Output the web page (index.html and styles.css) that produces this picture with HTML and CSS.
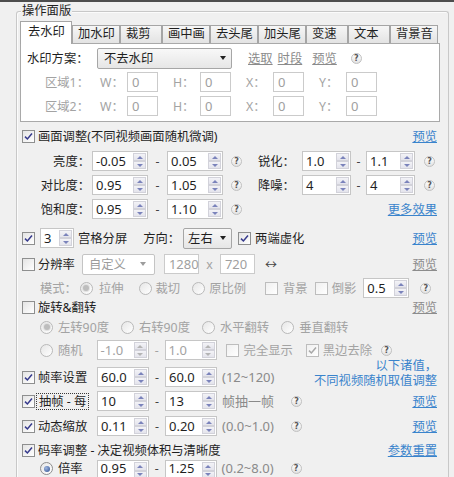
FILE: index.html
```html
<!DOCTYPE html>
<html lang="zh-CN">
<head>
<meta charset="utf-8">
<title>操作面版</title>
<link rel="stylesheet" href="styles.css">
</head>
<body>
<div class="topbar"></div>
<div class="group">
  <span class="legend">操作面版</span>
  <div class="tabs">
    <div class="tab active">去水印</div>
    <div class="tab">加水印</div>
    <div class="tab two">裁剪</div>
    <div class="tab">画中画</div>
    <div class="tab">去头尾</div>
    <div class="tab">加头尾</div>
    <div class="tab two">变速</div>
    <div class="tab two">文本</div>
    <div class="tab">背景音</div>
  </div>
  <div class="panel">
    <div class="prow first">
      <span class="plabel">水印方案：</span>
      <div class="combo scheme"><span>不去水印</span><i class="caret"></i></div>
      <a class="glink ml16">选取</a>
      <a class="glink ml5">时段</a>
      <a class="glink ml10">预览</a>
      <span class="help ml14">?</span>
    </div>
    <div class="prow">
      <span class="arealabel dis">区域1：</span>
      <span class="dim dis">W：</span><span class="inp small">0</span>
      <span class="dim dis ml15">H：</span><span class="inp small">0</span>
      <span class="dim dis ml15">X：</span><span class="inp small">0</span>
      <span class="dim dis ml15">Y：</span><span class="inp small">0</span>
    </div>
    <div class="prow third">
      <span class="arealabel dis">区域2：</span>
      <span class="dim dis">W：</span><span class="inp small">0</span>
      <span class="dim dis ml15">H：</span><span class="inp small">0</span>
      <span class="dim dis ml15">X：</span><span class="inp small">0</span>
      <span class="dim dis ml15">Y：</span><span class="inp small">0</span>
    </div>
  </div>

  <div class="adjust">
    <div class="row">
      <span class="cb"><svg viewBox="0 0 11 11"><path d="M2 5.6 4.4 8 9 2.6"/></svg></span>
      <span class="ml3">画面调整(不同视频画面随机微调)</span>
      <a class="link">预览</a>
    </div>
    <div class="row g5">
      <span class="rlabel">亮度：</span>
      <div class="spin ml2"><span class="val">-0.05</span><span class="btns"><i class="up"></i><i class="dn"></i></span></div>
      <span class="dash">-</span>
      <div class="spin"><span class="val">0.05</span><span class="btns"><i class="up"></i><i class="dn"></i></span></div>
      <span class="help ml8">?</span>
      <span class="rlabel2">锐化：</span>
      <div class="spin n49"><span class="val">1.0</span><span class="btns"><i class="up"></i><i class="dn"></i></span></div>
      <span class="dash d15">-</span>
      <div class="spin n49"><span class="val">1.1</span><span class="btns"><i class="up"></i><i class="dn"></i></span></div>
      <span class="help ml9">?</span>
    </div>
    <div class="row">
      <span class="rlabel">对比度：</span>
      <div class="spin ml2"><span class="val">0.95</span><span class="btns"><i class="up"></i><i class="dn"></i></span></div>
      <span class="dash">-</span>
      <div class="spin"><span class="val">1.05</span><span class="btns"><i class="up"></i><i class="dn"></i></span></div>
      <span class="help ml8">?</span>
      <span class="rlabel2">降噪：</span>
      <div class="spin n49"><span class="val">4</span><span class="btns"><i class="up"></i><i class="dn"></i></span></div>
      <span class="dash d15">-</span>
      <div class="spin n49"><span class="val">4</span><span class="btns"><i class="up"></i><i class="dn"></i></span></div>
      <span class="help ml9">?</span>
    </div>
    <div class="row">
      <span class="rlabel">饱和度：</span>
      <div class="spin ml2"><span class="val">0.95</span><span class="btns"><i class="up"></i><i class="dn"></i></span></div>
      <span class="dash">-</span>
      <div class="spin"><span class="val">1.10</span><span class="btns"><i class="up"></i><i class="dn"></i></span></div>
      <span class="help ml8">?</span>
      <a class="link">更多效果</a>
    </div>
    <div class="row g9">
      <span class="cb"><svg viewBox="0 0 11 11"><path d="M2 5.6 4.4 8 9 2.6"/></svg></span>
      <div class="spin n34 ml5"><span class="val">3</span><span class="btns"><i class="up"></i><i class="dn"></i></span></div>
      <span class="ml4">宫格分屏</span>
      <span class="ml16">方向：</span>
      <div class="combo dir ml3"><span>左右</span><i class="caret"></i></div>
      <span class="cb ml6"><svg viewBox="0 0 11 11"><path d="M2 5.6 4.4 8 9 2.6"/></svg></span>
      <span class="ml4">两端虚化</span>
      <a class="link">预览</a>
    </div>
    <div class="row g6">
      <span class="cb"></span>
      <span class="ml3">分辨率</span>
      <div class="combo dis res ml7"><span>自定义</span><i class="caret"></i></div>
      <span class="inp mid ml9">1280</span>
      <span class="times dis">x</span>
      <span class="inp mid">720</span>
      <span class="arrow ml10">↔</span>
      <a class="link off">预览</a>
    </div>
    <div class="row">
      <span class="dis ml18">模式：</span>
      <span class="rb on ml3"></span>
      <span class="dis ml6">拉伸</span>
      <span class="rb ml15"></span>
      <span class="dis ml4">裁切</span>
      <span class="rb ml12"></span>
      <span class="dis ml4">原比例</span>
      <span class="cb dis-cb ml19"></span>
      <span class="dis ml5">背景</span>
      <span class="cb dis-cb ml7"></span>
      <span class="dis ml4">倒影</span>
      <div class="spin n46 ml7"><span class="val">0.5</span><span class="btns"><i class="up"></i><i class="dn"></i></span></div>
      <span class="help ml11">?</span>
    </div>
    <div class="row g0 h19">
      <span class="cb"></span>
      <span class="ml3">旋转&amp;翻转</span>
      <a class="link off">预览</a>
    </div>
    <div class="row g0">
      <span class="rb on ml18"></span>
      <span class="dis ml5">左转90度</span>
      <span class="rb ml12"></span>
      <span class="dis ml5">右转90度</span>
      <span class="rb ml12"></span>
      <span class="dis ml5">水平翻转</span>
      <span class="rb ml12"></span>
      <span class="dis ml5">垂直翻转</span>
    </div>
    <div class="row g3">
      <span class="rb ml18"></span>
      <span class="dis ml5">随机</span>
      <div class="spin s52 off ml14"><span class="val">-1.0</span><span class="btns"><i class="up"></i><i class="dn"></i></span></div>
      <span class="dash d16 dis">-</span>
      <div class="spin s52 off"><span class="val">1.0</span><span class="btns"><i class="up"></i><i class="dn"></i></span></div>
      <span class="cb dis-cb ml9"></span>
      <span class="dis ml5">完全显示</span>
      <span class="cb dis-cb ml13"><svg viewBox="0 0 11 11"><path class="grey" d="M2 5.6 4.4 8 9 2.6"/></svg></span>
      <span class="dis ml4">黑边去除</span>
      <span class="help ml9">?</span>
    </div>
    <div class="row g7">
      <span class="cb"><svg viewBox="0 0 11 11"><path d="M2 5.6 4.4 8 9 2.6"/></svg></span>
      <span class="cell">帧率设置</span>
      <div class="spin s52"><span class="val">60.0</span><span class="btns"><i class="up"></i><i class="dn"></i></span></div>
      <span class="dash d16">-</span>
      <div class="spin s52"><span class="val">60.0</span><span class="btns"><i class="up"></i><i class="dn"></i></span></div>
      <span class="range">(12~120)</span>
      <div class="note"><span class="nline">以下诸值，</span><span class="nline">不同视频随机取值调整</span></div>
    </div>
    <div class="row">
      <span class="cb"><svg viewBox="0 0 11 11"><path d="M2 5.6 4.4 8 9 2.6"/></svg></span>
      <span class="cell"><span class="focus">抽帧 - 每</span></span>
      <div class="spin s52"><span class="val">10</span><span class="btns"><i class="up"></i><i class="dn"></i></span></div>
      <span class="dash d16">-</span>
      <div class="spin s52"><span class="val">13</span><span class="btns"><i class="up"></i><i class="dn"></i></span></div>
      <span class="range">帧抽一帧</span>
      <span class="help">?</span>
      <a class="link">预览</a>
    </div>
    <div class="row g5">
      <span class="cb"><svg viewBox="0 0 11 11"><path d="M2 5.6 4.4 8 9 2.6"/></svg></span>
      <span class="cell">动态缩放</span>
      <div class="spin s52"><span class="val">0.11</span><span class="btns"><i class="up"></i><i class="dn"></i></span></div>
      <span class="dash d16">-</span>
      <div class="spin s52"><span class="val">0.20</span><span class="btns"><i class="up"></i><i class="dn"></i></span></div>
      <span class="range">(0.0~1.0)</span>
      <span class="help">?</span>
      <a class="link">预览</a>
    </div>
    <div class="row g5 h19">
      <span class="cb"><svg viewBox="0 0 11 11"><path d="M2 5.6 4.4 8 9 2.6"/></svg></span>
      <span class="ml3">码率调整 - 决定视频体积与清晰度</span>
      <a class="link">参数重置</a>
    </div>
    <div class="row g0 last">
      <span class="rb on live ml18"></span>
      <span class="ml5">倍率</span>
      <div class="spin s52 ml14"><span class="val">0.95</span><span class="btns"><i class="up"></i><i class="dn"></i></span></div>
      <span class="dash d16">-</span>
      <div class="spin s52"><span class="val">1.25</span><span class="btns"><i class="up"></i><i class="dn"></i></span></div>
      <span class="range">(0.2~8.0)</span>
      <span class="help">?</span>
    </div>
  </div>
</div>
</body>
</html>
```

FILE: styles.css
```css
* { box-sizing: border-box; }
html, body { margin: 0; padding: 0; }
body {
  width: 454px;
  height: 477px;
  overflow: hidden;
  background: #f0f0f0;
  color: #1f1f1f;
  font-family: "Noto Sans", "Noto Sans CJK SC", sans-serif;
  font-size: 12.3px;
  line-height: 17px;
}
a { cursor: pointer; }

.topbar { height: 2px; background: #4d4d4d; }

.group {
  position: relative;
  margin: 9px 0 0 16px;
  width: 433px;
  height: 466px;
  border: 1px solid #c8c8c8;
  border-bottom: 0;
  border-radius: 3px 3px 0 0;
  padding: 9px 8px 0 3px;
  box-shadow: inset 1px 1px 0 #fbfbfb;
}
.legend {
  position: absolute;
  left: 4px;
  top: -9px;
  padding: 0 1px;
  line-height: 16px;
  background: #f0f0f0;
}

/* tabs */
.tabs {
  display: flex;
  align-items: flex-end;
  height: 22px;
  position: relative;
  z-index: 1;
}
.tab {
  width: 48px;
  height: 18px;
  padding-left: 5px;
  border: 1px solid #a5a5a5;
  border-bottom: 0;
  background: linear-gradient(#f6f6f6, #e3e3e3);
  line-height: 16px;
  white-space: nowrap;
}
.tab.two { width: 42px; }
.tab.active {
  width: 52px;
  height: 23px;
  margin-bottom: -1px;
  padding-left: 7px;
  background: #fff;
  line-height: 20px;
}

.panel {
  height: 79px;
  background: #fff;
  border: 1px solid #a9a9a9;
  padding: 3px 0 0 6px;
}
.prow { display: flex; align-items: center; height: 20px; margin-top: 3px; }
.prow.first { height: 22px; margin-top: 0; }
.prow.third { margin-top: 4px; }
.plabel { width: 70px; flex: none; }
.arealabel { width: 55px; margin-left: 18px; flex: none; }
.dim { width: 27px; flex: none; }

.glink { color: #8b8b8b; text-decoration: underline; }

/* lower section */
.adjust { padding: 0 3px 0 2px; }
.row {
  display: flex;
  align-items: center;
  height: 20px;
  margin-top: 4px;
  white-space: nowrap;
}
.row.g0 { margin-top: 0; }
.row.g3 { margin-top: 3px; }
.row.g5 { margin-top: 5px; }
.row.g6 { margin-top: 6px; }
.row.g7 { margin-top: 7px; }
.row.g9 { margin-top: 9px; }
.row.h19 { height: 19px; }
.row.last { height: 17px; line-height: 15px; }
.row.last .spin { height: 17px; border-bottom: 0; }
.row.last .spin .val { line-height: 15px; }
.row.last .spin .btns { padding-bottom: 0; }
.row.last .spin .btns i.dn { flex: 0 0 6px; border-bottom: 0; }

.rlabel { width: 68px; text-align: right; flex: none; }
.rlabel2 { width: 44px; margin-left: 16px; flex: none; }
.cell { width: 59px; margin-left: 3px; flex: none; }
.focus {
  display: inline-block;
  margin-left: -2px;
  padding: 0 2px;
  border: 1px dotted #3a3a3a;
  line-height: 15px;
}
.range { width: 69px; margin-left: 5px; flex: none; color: #8a8a8a; font-size: 13px; }
.dash { width: 19px; text-align: center; flex: none; color: #444; }
.dash.d15 { width: 15px; }
.dash.d16 { width: 16px; }
.times { width: 21px; text-align: center; flex: none; }
.arrow { color: #444; font-size: 12px; }

.dis { color: #a3a3a3; }

.link { margin-left: auto; color: #3a84cc; text-decoration: underline; }
.link.off { color: #8c8c8c; }

.note {
  margin-left: auto;
  align-self: flex-end;
  margin-bottom: -1px;
  display: flex;
  flex-direction: column;
  align-items: flex-end;
  color: #3a84cc;
}
.nline { display: block; height: 15px; line-height: 15px; }

/* controls */
.cb {
  width: 13px;
  height: 13px;
  flex: none;
  border: 1px solid #8e8f8f;
  background: linear-gradient(135deg, #e4e4e4, #ffffff);
  display: flex;
  align-items: center;
  justify-content: center;
}
.cb.dis-cb { border-color: #bdbdbd; background: linear-gradient(135deg, #f0f0f0, #ffffff); }
.cb svg { width: 11px; height: 11px; }
.cb path { fill: none; stroke: #363a8c; stroke-width: 1.5; }
.cb path.grey { stroke: #a8a8a8; }

.rb {
  position: relative;
  width: 13px;
  height: 13px;
  flex: none;
  border-radius: 50%;
  border: 1px solid #b9b9b9;
  background: linear-gradient(135deg, #e6e6e6, #ffffff);
}
.rb.on::after {
  content: "";
  position: absolute;
  left: 2.5px;
  top: 2.5px;
  width: 6px;
  height: 6px;
  border-radius: 50%;
  background: #bdbdbd;
  box-shadow: 0 0 0 1px #e2e2e2;
}
.rb.live { border-color: #8d8d8d; }
.rb.live::after { background: radial-gradient(circle at 35% 35%, #9fb6e0, #2c4f8f); box-shadow: none; }

.help {
  width: 11px;
  height: 11px;
  flex: none;
  border-radius: 50%;
  border: 1px solid #c0c0c0;
  background: linear-gradient(#ffffff, #e2e2e2);
  color: #555;
  font: bold 8px/9px "DejaVu Sans", sans-serif;
  text-align: center;
}

.spin {
  display: flex;
  width: 56px;
  height: 20px;
  flex: none;
  border: 1px solid #c6c6c6;
  background: #fff;
}
.spin.n49 { width: 49px; }
.spin.n46 { width: 46px; }
.spin.n34 { width: 34px; }
.spin.s52 { width: 52px; }
.spin .val {
  flex: 1;
  padding-left: 3px;
  font-size: 13px;
  line-height: 18px;
}
.spin.off .val { color: #a3a3a3; }
.spin .btns {
  width: 14px;
  flex: none;
  display: flex;
  flex-direction: column;
  padding: 1px 1px 1px 0;
}
.spin .btns i {
  flex: 1;
  display: flex;
  align-items: center;
  justify-content: center;
  background: linear-gradient(#f3f3f7, #e4e4ec);
  border: 1px solid #d2d2da;
}
.spin .btns i.up::before {
  content: "";
  border-left: 3px solid transparent;
  border-right: 3px solid transparent;
  border-bottom: 3px solid #7b83bb;
}
.spin .btns i.dn::before {
  content: "";
  border-left: 3px solid transparent;
  border-right: 3px solid transparent;
  border-top: 3px solid #7b83bb;
}
.spin.off .btns i.up::before { border-bottom-color: #b4b4b4; }
.spin.off .btns i.dn::before { border-top-color: #b4b4b4; }

.combo {
  display: flex;
  align-items: center;
  height: 21px;
  flex: none;
  border: 1px solid #a6a6a6;
  border-radius: 2px;
  background: linear-gradient(#f8f8f8, #e6e6e6);
  padding: 0 5px 0 6px;
}
.combo.scheme { width: 135px; }
.combo.dir { width: 49px; padding-left: 4px; }
.combo.res { width: 73px; }
.combo .caret {
  margin-left: auto;
  border-left: 3.5px solid transparent;
  border-right: 3.5px solid transparent;
  border-top: 4px solid #222;
}
.combo.dis { background: #fff; border-color: #c4c4c4; color: #9c9c9c; }
.combo.dis .caret { border-top-color: #9c9c9c; margin-right: 3px; }

.inp {
  height: 20px;
  flex: none;
  border: 1px solid #cbcbcb;
  background: #fff;
  color: #a0a0a0;
  padding-left: 4px;
  font-size: 13px;
  line-height: 18px;
}
.inp.small { width: 31px; }
.inp.mid { width: 35px; }

.ml2 { margin-left: 2px; }
.ml3 { margin-left: 3px; }
.ml4 { margin-left: 4px; }
.ml5 { margin-left: 5px; }
.ml6 { margin-left: 6px; }
.ml7 { margin-left: 7px; }
.ml8 { margin-left: 8px; }
.ml9 { margin-left: 9px; }
.ml10 { margin-left: 10px; }
.ml11 { margin-left: 11px; }
.ml12 { margin-left: 12px; }
.ml13 { margin-left: 13px; }
.ml14 { margin-left: 14px; }
.ml15 { margin-left: 15px; }
.ml16 { margin-left: 16px; }
.ml18 { margin-left: 18px; }
.ml19 { margin-left: 19px; }
```
